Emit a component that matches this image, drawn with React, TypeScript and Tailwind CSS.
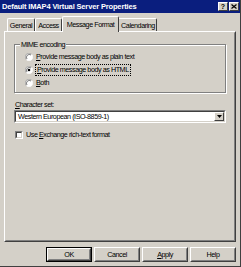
import React from "react";

const font = { fontFamily: '"Liberation Sans", Arial, sans-serif' };

function U({ children }: { children: React.ReactNode }) {
  return <span className="underline underline-offset-[1px]">{children}</span>;
}

function Radio({ checked }: { checked?: boolean }) {
  return (
    <svg width="8" height="8" viewBox="0 0 12 12" className="shrink-0">
      <circle cx="6" cy="6" r="5.5" fill="#ffffff" />
      <path d="M10 2 A5.5 5.5 0 0 0 2 10" fill="none" stroke="#808080" strokeWidth="1" />
      <path d="M2 10 A5.5 5.5 0 0 0 10 2" fill="none" stroke="#ffffff" strokeWidth="1" />
      <path d="M9 3 A4.3 4.3 0 0 0 3 9" fill="none" stroke="#404040" strokeWidth="1" />
      {checked && <circle cx="6" cy="6" r="2" fill="#000000" />}
    </svg>
  );
}

function Btn({ children, def }: { children: React.ReactNode; def?: boolean }) {
  return (
    <div
      className={
        "flex h-[15px] w-[46px] items-center justify-center " +
        (def ? "border border-black" : "")
      }
    >
      <div className="flex h-full w-full items-center justify-center border border-t-white border-l-white border-r-[#404040] border-b-[#404040]">
        <div className="flex h-full w-full items-center justify-center border border-transparent border-r-[#808080] border-b-[#808080]">
          {children}
        </div>
      </div>
    </div>
  );
}

export default function App() {
  return (
    <div
      className="relative flex h-[267px] w-[241px] flex-col overflow-hidden bg-[#d4d0c8] text-[7.2px] tracking-[-0.45px] text-black leading-none border-r border-b border-r-[#404040] border-b-[#404040]"
      style={font}
    >
      {/* title bar */}
      <div className="flex h-[13px] items-center justify-between bg-[#0a1e7e] pl-[2px] pr-[1px]">
        <span className="text-[7.5px] font-bold tracking-[-0.15px] text-white">
          Default IMAP4 Virtual Server Properties
        </span>
        <div className="flex gap-[1px]">
          <div className="flex h-[9px] w-[10px] items-center justify-center border border-t-white border-l-white border-r-[#404040] border-b-[#404040] bg-[#d4d0c8] text-[7px] font-bold tracking-normal">
            ?
          </div>
          <div className="flex h-[9px] w-[10px] items-center justify-center border border-t-white border-l-white border-r-[#404040] border-b-[#404040] bg-[#d4d0c8]">
            <svg width="6" height="5" viewBox="0 0 6 5">
              <path d="M0.5 0.5 L5.5 4.5 M5.5 0.5 L0.5 4.5" stroke="#000" strokeWidth="1.2" />
            </svg>
          </div>
        </div>
      </div>

      <div className="flex flex-1 flex-col px-[4px] pt-[3px]">
        {/* tabs */}
        <div className="flex items-end pl-[3px]">
          <div className="flex h-[13px] w-[28px] items-start justify-center border-l border-t border-r border-l-white border-t-white border-r-[#404040] pt-[3px] rounded-t-[2px]">
            General
          </div>
          <div className="flex h-[13px] w-[27px] items-start justify-center border-l border-t border-r border-l-white border-t-white border-r-[#404040] pt-[3px] rounded-t-[2px]">
            Access
          </div>
          <div className="relative z-10 -mb-px -mr-[2px] flex h-[16px] w-[57px] items-start justify-center border-l border-t border-r border-l-white border-t-white border-r-[#404040] bg-[#d4d0c8] pt-[4px] rounded-t-[2px]">
            Message Format
          </div>
          <div className="flex h-[13px] w-[40px] items-start justify-center border-l border-t border-r border-l-white border-t-white border-r-[#404040] pt-[3px] pl-[2px] rounded-t-[2px]">
            Calendaring
          </div>
        </div>

        {/* panel */}
        <div className="h-[211px] border border-t-white border-l-white border-r-[#404040] border-b-[#404040]">
          <div className="flex h-full flex-col border border-transparent border-r-[#808080] border-b-[#808080] px-[8px] pt-[11px]">
            {/* group box */}
            <div className="relative border border-[#808080] shadow-[1px_1px_0_0_#ffffff,inset_1px_1px_0_0_#ffffff]">
              <span className="absolute left-[5px] top-[-4px] bg-[#d4d0c8] px-[1px]">MIME encoding</span>
              <div className="flex flex-col gap-[1px] pl-[10px] pt-[6px] pb-[3px]">
                <div className="flex h-[12px] items-center gap-[3px]">
                  <Radio />
                  <span>
                    <U>P</U>rovide message body as plain text
                  </span>
                </div>
                <div className="flex h-[12px] items-center gap-[2px]">
                  <Radio checked />
                  <span className="border border-dotted border-black px-[1px] py-[1px]">
                    <U>P</U>rovide message body as HTML
                  </span>
                </div>
                <div className="flex h-[12px] items-center gap-[3px]">
                  <Radio />
                  <span>
                    <U>B</U>oth
                  </span>
                </div>
              </div>
            </div>

            <div className="mt-[8px] h-[9px] pl-[1px]">
              <U>C</U>haracter set:
            </div>

            {/* select */}
            <div className="flex h-[13px] items-stretch border border-t-[#808080] border-l-[#808080] border-r-white border-b-white">
              <div className="flex flex-1 items-stretch border border-t-[#404040] border-l-[#404040] border-r-[#d4d0c8] border-b-[#d4d0c8] bg-white">
                <span className="flex flex-1 items-center pl-[2px]">Western European (ISO-8859-1)</span>
                <div className="flex w-[10px] items-center justify-center border border-t-white border-l-white border-r-[#404040] border-b-[#404040] bg-[#d4d0c8]">
                  <svg width="5" height="3" viewBox="0 0 5 3">
                    <path d="M0 0 H5 L2.5 3 Z" fill="#000" />
                  </svg>
                </div>
              </div>
            </div>

            <div className="mt-[7px] flex h-[10px] items-center gap-[3px] pl-[1px]">
              <div className="h-[8px] w-[8px] border border-t-[#808080] border-l-[#808080] border-r-white border-b-white">
                <div className="h-full w-full border border-t-[#404040] border-l-[#404040] border-r-[#d4d0c8] border-b-[#d4d0c8] bg-white" />
              </div>
              <span>
                Use <U>E</U>xchange rich-text format
              </span>
            </div>
          </div>
        </div>

        {/* buttons */}
        <div className="mt-[5px] flex justify-end gap-[2px]">
          <Btn def>OK</Btn>
          <Btn>Cancel</Btn>
          <Btn>
            <span>
              <U>A</U>pply
            </span>
          </Btn>
          <Btn>Help</Btn>
        </div>
      </div>
    </div>
  );
}
